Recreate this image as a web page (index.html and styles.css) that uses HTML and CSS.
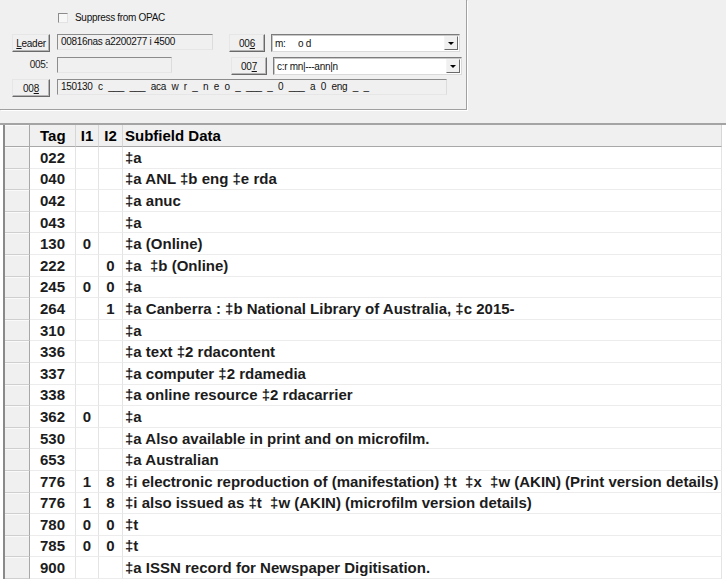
FILE: index.html
```html
<!DOCTYPE html>
<html>
<head>
    <title>MARC Record</title>
    <link rel="stylesheet" href="styles.css">
</head>
<body>
    <div class="top">
        <div class="group">
            <div class="suppress">
                <span class="check"></span>
                <span>Suppress from OPAC</span>
            </div>

            <div class="row r1">
                <button class="btn"><u>L</u>eader</button>
                <div class="field f-leader">00816nas a2200277 i 4500</div>
                <button class="btn btn-fix">00<u>6</u></button>
                <div class="combo">
                    <span class="combo-text">m:&nbsp;&nbsp;&nbsp;&nbsp; o d</span>
                    <span class="arrow"></span>
                </div>
            </div>

            <div class="row r2">
                <span class="lbl">005:</span>
                <div class="field f-005"></div>
                <button class="btn btn-fix btn-007">00<u>7</u></button>
                <div class="combo">
                    <span class="combo-text">c:r mn|---ann|n</span>
                    <span class="arrow"></span>
                </div>
            </div>

            <div class="row r3">
                <button class="btn">00<u>8</u></button>
                <div class="field f-008">150130 c ___ ___ aca w r _ n e o _ ___ _ 0 ___ a 0 eng _ _</div>
            </div>
        </div>
    </div>

    <div class="grid" id="grid">
        <div class="sel head"></div>
        <div class="c tag head">Tag</div>
        <div class="c ind head">I1</div>
        <div class="c ind head">I2</div>
        <div class="c sub head">Subfield Data</div>
    </div>

    <script>
        // tag, ind1, ind2, subfield data
        var rows = [
            ['022', '', '', '‡a'],
            ['040', '', '', '‡a ANL ‡b eng ‡e rda'],
            ['042', '', '', '‡a anuc'],
            ['043', '', '', '‡a'],
            ['130', '0', '', '‡a (Online)'],
            ['222', '', '0', '‡a  ‡b (Online)'],
            ['245', '0', '0', '‡a'],
            ['264', '', '1', '‡a Canberra : ‡b National Library of Australia, ‡c 2015-'],
            ['310', '', '', '‡a'],
            ['336', '', '', '‡a text ‡2 rdacontent'],
            ['337', '', '', '‡a computer ‡2 rdamedia'],
            ['338', '', '', '‡a online resource ‡2 rdacarrier'],
            ['362', '0', '', '‡a'],
            ['530', '', '', '‡a Also available in print and on microfilm.'],
            ['653', '', '', '‡a Australian'],
            ['776', '1', '8', '‡i electronic reproduction of (manifestation) ‡t  ‡x  ‡w (AKIN) (Print version details)'],
            ['776', '1', '8', '‡i also issued as ‡t  ‡w (AKIN) (microfilm version details)'],
            ['780', '0', '0', '‡t'],
            ['785', '0', '0', '‡t'],
            ['900', '', '', '‡a ISSN record for Newspaper Digitisation.']
        ];

        var grid = document.getElementById('grid');
        rows.forEach(function(r) {
            var html = '<div class="sel"></div>' +
                '<div class="c tag">' + r[0] + '</div>' +
                '<div class="c ind">' + r[1] + '</div>' +
                '<div class="c ind">' + r[2] + '</div>' +
                '<div class="c sub">' + r[3] + '</div>';
            grid.insertAdjacentHTML('beforeend', html);
        });
    </script>
</body>
</html>
```

FILE: styles.css
```css
body {
    margin: 0;
    background: #fff;
    font-family: "Liberation Sans", Arial, sans-serif;
    overflow: hidden;
}

.top {
    height: 123px;
    background: #f0f0f0;
    border-bottom: 2px solid #a4a4a4;
}

.group {
    box-sizing: border-box;
    width: 467px;
    height: 110px;
    padding-top: 12px;
    border-right: 1px solid #a0a0a0;
    border-bottom: 1px solid #a0a0a0;
    box-shadow: 1px 1px 0 #fff;
    font-size: 10px;
    letter-spacing: -0.3px;
    color: #111;
}

.suppress {
    display: flex;
    align-items: center;
    height: 11px;
    padding-left: 58px;
}

.check {
    box-sizing: border-box;
    width: 10px;
    height: 10px;
    margin-right: 7px;
    background: #f7f7f7;
    border: 1px solid;
    border-color: #8c8c8c #e2e2e2 #e2e2e2 #8c8c8c;
}

.row {
    display: flex;
    align-items: flex-start;
    height: 18px;
    padding-left: 12px;
}

.r1 { margin-top: 11px; }
.r2 { margin-top: 5px; }
.r3 { margin-top: 4px; }

.btn {
    box-sizing: border-box;
    width: 38px;
    height: 18px;
    margin: 0 7px 0 0;
    padding: 0;
    background: #f0f0f0;
    border: 1px solid;
    border-color: #e6e6e6 #6a6a6a #6a6a6a #e6e6e6;
    box-shadow: inset -1px -1px 0 #b4b4b4;
    font-family: "Liberation Sans", Arial, sans-serif;
    font-size: 10px;
    letter-spacing: -0.3px;
    color: #111;
}

.btn-fix {
    width: 36px;
    margin-left: 16px;
    margin-right: 6px;
}

.btn-007 {
    margin-left: 59px;
}

.lbl {
    width: 36px;
    margin-right: 9px;
    line-height: 16px;
    text-align: right;
    color: #222;
}

.field {
    box-sizing: border-box;
    height: 16px;
    padding-left: 3px;
    line-height: 14px;
    white-space: pre;
    background: #f0f0f0;
    border: 1px solid;
    border-color: #8c8c8c #dcdcdc #e6e6e6 #8c8c8c;
}

.f-leader { width: 156px; }
.f-005 { width: 115px; }
.f-008 {
    width: 390px;
    word-spacing: 3px;
}

.combo {
    box-sizing: border-box;
    display: flex;
    align-items: center;
    justify-content: space-between;
    width: 189px;
    height: 18px;
    background: #fff;
    border: 1px solid;
    border-color: #7c7c7c #dadada #dadada #7c7c7c;
    box-shadow: inset 1px 1px 0 #c8c8c8;
}

.combo-text {
    padding-left: 3px;
    white-space: pre;
}

.arrow {
    box-sizing: border-box;
    position: relative;
    width: 14px;
    height: 14px;
    margin-right: 1px;
    background: #f0f0f0;
    border: 1px solid;
    border-color: #f4f4f4 #6a6a6a #6a6a6a #f4f4f4;
}

.arrow::after {
    content: "";
    position: absolute;
    left: 3px;
    top: 5px;
    border-left: 3px solid transparent;
    border-right: 3px solid transparent;
    border-top: 3px solid #000;
}

.grid {
    display: grid;
    grid-template-columns: 25px 46px 23px 24px 599px;
    grid-template-rows: 22px;
    grid-auto-rows: 21.6px;
    margin-left: 3px;
    border-left: 2px solid #8a8a8a;
    font-size: 15px;
    font-weight: bold;
    color: #1c1c1c;
}

.grid > div {
    box-sizing: border-box;
    border-right: 1px solid #e4e4e4;
    border-bottom: 1px solid #ececec;
    white-space: pre;
    display: flex;
    align-items: center;
}

.grid > .sel {
    background: #f0f0f0;
    border-right: 1px solid #a8a8a8;
    border-bottom: 1px solid #cfcfcf;
    box-shadow: inset 0 1px 0 #fafafa;
}

.grid > .head {
    background: #f0f0f0;
    border-bottom: 1px solid #a8a8a8;
    border-right: 1px solid #d6d6d6;
    color: #000;
}

.grid > .sel.head {
    border-right: 1px solid #a8a8a8;
}

.tag {
    padding-left: 10px;
}

.ind {
    justify-content: center;
}

.sub {
    padding-left: 2px;
}
```
